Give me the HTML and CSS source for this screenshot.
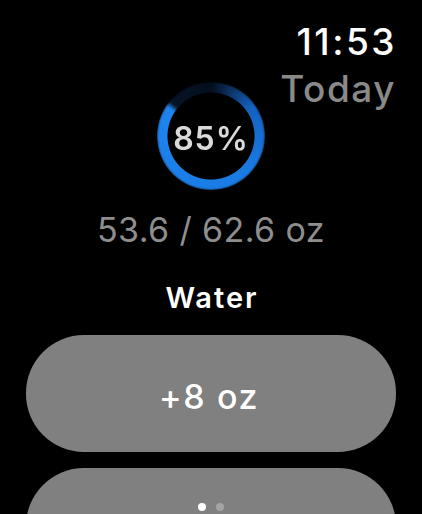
FILE: index.html
```html
<!DOCTYPE html>
<html lang="en">
<head>
  <meta charset="UTF-8">
  <meta name="viewport" content="width=device-width, initial-scale=1.0">
  <title>Water</title>
  <link rel="stylesheet" href="styles.css">
</head>
<body>

<div class="screen">
  <div class="top">
    <div class="time">11:53</div>
    <div class="today">Today</div>
    <div class="ring">
      <div class="ring-track"></div>
      <span class="ring-label">85%</span>
    </div>
  </div>

  <div class="amount">53.6 / 62.6 oz</div>
  <div class="title">Water</div>

  <div class="actions">
    <button class="pill">+8 oz</button>
    <button class="pill">+16 oz</button>
  </div>

  <!-- page indicator -->
  <div class="dots">
    <span class="dot active"></span>
    <span class="dot"></span>
  </div>
</div>

</body>
</html>
```

FILE: styles.css
```css
body {
  margin: 0;
  background-color: #000;
  font-family: 'Inter', 'Liberation Sans', sans-serif;
  overflow: hidden;
}

.screen {
  position: relative;
  width: 422px;
  height: 514px;
  overflow: hidden;
  display: flex;
  flex-direction: column;
  align-items: center;
}

.top {
  width: 100%;
  display: grid;
  grid-template-columns: 1fr 108px 1fr;
  grid-template-rows: 47px auto;
  padding-top: 18px;
}

.time {
  grid-column: 3;
  grid-row: 1;
  justify-self: end;
  padding-right: 25px;
  color: #fff;
  font-size: 37px;
  font-weight: 500;
  line-height: 47px;
  letter-spacing: 2.5px;
}

.today {
  grid-column: 3;
  grid-row: 2;
  align-self: start;
  justify-self: end;
  padding-right: 26px;
  color: #8a8a8a;
  font-size: 37px;
  font-weight: 500;
  line-height: 47px;
  letter-spacing: 1.5px;
}

.ring {
  grid-column: 2;
  grid-row: 2;
  position: relative;
  width: 108px;
  height: 108px;
  margin-top: 17px;
  display: flex;
  justify-content: center;
  align-items: center;
}

.ring-track {
  position: absolute;
  inset: 0;
  border-radius: 50%;
  background: conic-gradient(
    rgba(30, 100, 200, 0.14) 0deg,
    #1562c2 55deg,
    #1a7ae2 130deg,
    #1e84ee 304deg,
    rgba(30, 100, 200, 0.2) 310deg,
    rgba(30, 100, 200, 0.14) 360deg
  );
  -webkit-mask: radial-gradient(circle, transparent 43px, #000 44px);
  mask: radial-gradient(circle, transparent 43px, #000 44px);
  filter: blur(0.8px);
}

.ring-label {
  position: relative;
  color: #dadada;
  font-size: 32px;
  font-weight: 600;
  letter-spacing: 1px;
  margin-top: 4px;
  filter: blur(0.6px);
}

.amount {
  margin-top: 20px;
  color: #8e8e8e;
  font-size: 34px;
  line-height: 40px;
  letter-spacing: 0.4px;
}

.title {
  margin-top: 30px;
  color: #fff;
  font-size: 29px;
  font-weight: 600;
  line-height: 36px;
  letter-spacing: 2px;
  padding-left: 2px;
}

.actions {
  margin-top: 19px;
  display: flex;
  flex-direction: column;
  gap: 16px;
}

.pill {
  width: 370px;
  height: 117px;
  border: none;
  border-radius: 58px;
  background-color: #808080;
  color: #fff;
  font-family: 'Inter', 'Liberation Sans', sans-serif;
  font-size: 34px;
  font-weight: 500;
  letter-spacing: 1.6px;
  padding-top: 6px;
  padding-left: 2px;
}

.dots {
  position: absolute;
  left: 0;
  right: 0;
  bottom: 3px;
  display: flex;
  justify-content: center;
  gap: 10px;
}

.dot {
  width: 8px;
  height: 8px;
  border-radius: 50%;
  background-color: #a4a4a4;
}

.dot.active {
  background-color: #fff;
}
```
